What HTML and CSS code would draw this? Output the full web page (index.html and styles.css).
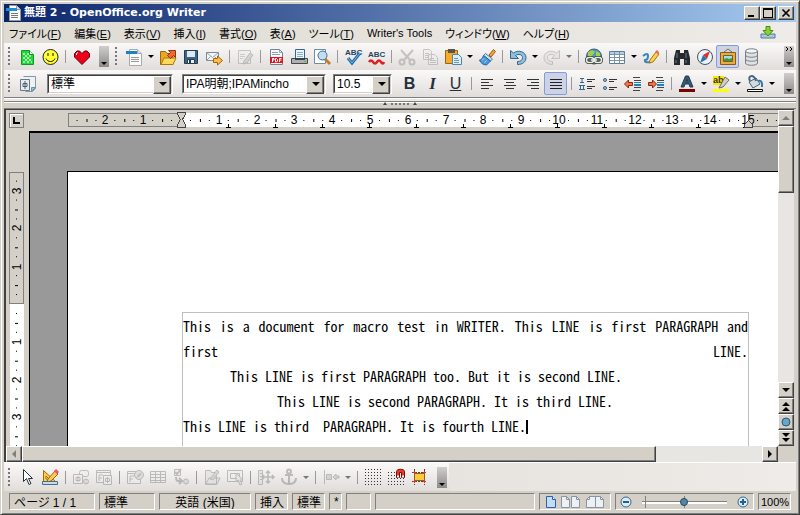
FILE: index.html
```html
<!DOCTYPE html>
<html lang="ja">
<head>
<meta charset="utf-8">
<title>無題 2 - OpenOffice.org Writer</title>
<link rel="stylesheet" href="styles.css">
</head>
<body>
<div class="window">
  <header class="titlebar">
    <svg class="app-icon" viewBox="0 0 16 16" aria-hidden="true"><path d="M3.500.5h7l4 4v11h-11z" fill="#fff" stroke="#999"/><path d="M10.500.5v4h4" fill="#ddd" stroke="#999"/><path d="M0 3h11v3H0z" fill="#1b8fd0"/><path d="M5 8.500h7M5 10.500h7M5 12.500h7" stroke="#777"/></svg>
    <h1>無題 2 - OpenOffice.org Writer</h1>
    <div class="caption-buttons">
      <button aria-label="最小化"><svg viewBox="0 0 12 10"><path d="M2 7h6v2H2z"/></svg></button>
      <button aria-label="最大化"><svg viewBox="0 0 12 10"><path d="M1 0h10v10H1zM2 2v7h8V2z" fill-rule="evenodd"/></svg></button>
      <button class="close" aria-label="閉じる"><svg viewBox="0 0 12 10"><path d="M2.500 1.500l7 7M9.500 1.500l-7 7" stroke="#000" stroke-width="1.700"/></svg></button>
    </div>
  </header>

  <nav class="menubar">
    <a href="#">ファイル(<u>F</u>)</a>
    <a href="#">編集(<u>E</u>)</a>
    <a href="#">表示(<u>V</u>)</a>
    <a href="#">挿入(<u>I</u>)</a>
    <a href="#">書式(<u>O</u>)</a>
    <a href="#">表(<u>A</u>)</a>
    <a href="#">ツール(<u>T</u>)</a>
    <a href="#">Writer's Tools</a>
    <a href="#">ウィンドウ(<u>W</u>)</a>
    <a href="#">ヘルプ(<u>H</u>)</a>
    <button class="update" aria-label="更新"><svg viewBox="0 0 16 14"><path d="M1 8h14v4H1z" fill="#a9c9da" stroke="#4d7f9c"/><path d="M6 .5h4v4h3L8 10 3 4.500h3z" fill="#8fd12f" stroke="#4b8a13"/></svg></button>
  </nav>

  <div class="toolbar">
    <span class="grip"></span>
    <button class="tool" aria-label="表計算"><svg viewBox="0 0 20 20"><path d="M4.500 3.500h8l4 4v10h-12z" fill="#20d83a" stroke="#14962a"/><path d="M6 6h2v2H6zM10 6h2v2h-2zM8 8h2v2H8zM12 8h2v2h-2zM6 10h2v2H6zM10 10h2v2h-2zM8 12h2v2H8zM12 12h2v2h-2zM6 14h2v2H6zM10 14h2v2h-2zM14 14h1v2h-1z" fill="#a7f7ae"/><path d="M12.500 3.500v4h4" fill="#fff" stroke="#14962a"/></svg></button>
    <button class="tool" aria-label="スマイル"><svg viewBox="0 0 20 20"><circle cx="10.500" cy="10" r="7.500" fill="#ff3" stroke="#222"/><path d="M7.500 6h1v3h-1zM12.500 6h1v3h-1z" fill="#111"/><path d="M6 11.500c1.500 4 7.500 4 9 0" fill="none" stroke="#111"/></svg></button>
    <span class="sep"></span>
    <button class="tool" aria-label="お気に入り"><svg viewBox="0 0 20 20"><path d="M11 17.500L3.500 10V6.500L6 4h2.500L11 6.500 13.500 4H16l2.500 2.500V10z" fill="#f00019" stroke="#5a0010"/><path d="M5.500 8V6.500L7 5.500" fill="none" stroke="#fff"/></svg></button>
    <button class="overflow first" aria-label="その他"></button>
    <span class="grip second"></span>
    <button class="tool" aria-label="新規作成"><svg viewBox="0 0 20 20"><path d="M5.500 2.500h8l4 4v12h-12z" fill="#fafafa" stroke="#aaa"/><path d="M13.500 2.500v4h4" fill="#ddd" stroke="#aaa"/><path d="M2 4h11v3H2z" fill="#1b84c0"/><path d="M7 10.500h8M7 12.500h8M7 14.500h8" stroke="#999"/></svg></button><button class="drop" aria-label="新規の種類"></button>
    <button class="tool" aria-label="開く"><svg viewBox="0 0 20 20"><path d="M2.500 17.500v-13h5l1.500 2h6v11z" fill="#e9a726" stroke="#9b6a10"/><path d="M3 17.500L6 11h12l-3 6.500z" fill="#ffd95c" stroke="#ad770d"/><path d="M9.500 8.500l3-3-2-2h7v7l-2-2-3 3z" fill="#ef6c2d" stroke="#96310c"/></svg></button>
    <button class="tool" aria-label="保存"><svg viewBox="0 0 20 20"><path d="M3.500 3.500h13v13h-13z" fill="#40637f" stroke="#223c52"/><path d="M6 4h8v6H6z" fill="#dce9f3"/><path d="M6.500 12.500h7v4h-7z" fill="#eee" stroke="#223c52"/><path d="M8 13h2v3H8z" fill="#223c52"/></svg></button>
    <button class="tool" aria-label="メール"><svg viewBox="0 0 20 20"><path d="M2.500 5.500h12v8h-12z" fill="#f2f5f8" stroke="#7d8b98"/><path d="M2.500 5.500l6 5 6-5M2.500 13.500l4-4M14.500 13.500l-4-4" fill="none" stroke="#93a1ad"/><path d="M9.500 11.500h4V9l5 4.500-5 4.500v-2.500h-4z" fill="#ffbd4a" stroke="#a86108"/></svg></button>
    <span class="sep"></span>
    <button class="tool off" aria-label="編集" disabled><svg viewBox="0 0 20 20"><path d="M3.500 3.500h12v13h-12z" fill="#eee" stroke="#999"/><path d="M5 7.500h5M5 9.500h5M5 11.500h3" stroke="#aaa"/><path d="M9 14l6-8 3 2-6 8-4 1z" fill="#bbb" stroke="#888"/></svg></button>
    <span class="sep"></span>
    <button class="tool" aria-label="PDF"><svg viewBox="0 0 20 20"><path d="M4.500 2.500h9l3 3v12h-12z" fill="#f7f9fb" stroke="#6b8699"/><path d="M13.500 2.500v3h3M6 5.500h6M6 7.500h8" fill="none" stroke="#8aa3b5"/><path d="M4 10h13v6H4z" fill="#e0161c"/><path d="M6.500 15v-3.500H8V13H6.500M9.500 15v-3.500h1l1 1v1.500l-1 1zM13.500 15v-3.500h2M13.500 13h2" fill="none" stroke="#fff"/></svg></button>
    <button class="tool" aria-label="印刷"><svg viewBox="0 0 20 20"><path d="M6.500 2.500h9v9h-9z" fill="#eef6fc" stroke="#37678b"/><path d="M8 5.500h6M8 7.500h6M8 9.500h6" stroke="#7fb0d0"/><path d="M2.500 11.500h16v5h-16z" fill="#aeb0b2" stroke="#44484b"/><path d="M6 11h10v2H6z" fill="#3c4043"/><path d="M15 14.500h2" stroke="#2ad532"/></svg></button>
    <button class="tool" aria-label="プレビュー"><svg viewBox="0 0 20 20"><path d="M2.500 2.500h11v14h-11z" fill="#fff" stroke="#6a8dac"/><path d="M13 12l5 5" stroke="#c97b21" stroke-width="3"/><circle cx="10.500" cy="8.500" r="4.500" fill="#bfe0f3" stroke="#426b88"/></svg></button>
    <span class="sep"></span>
    <button class="tool" aria-label="スペルチェック"><svg viewBox="0 0 20 20"><text x="2" y="8" class="icon-abc">ABC</text><path d="M5 11l4 5 8-10" fill="none" stroke="#1f6ca8" stroke-width="3"/><path d="M5 11l4 5 8-10" fill="none" stroke="#78baea"/></svg></button>
    <button class="tool" aria-label="自動スペルチェック"><svg viewBox="0 0 20 20"><text x="2" y="10" class="icon-abc">ABC</text><path d="M3 15q2-3 4 0t4 0 4 0 3 0" fill="none" stroke="#dc2020" stroke-width="2.500"/></svg></button>
    <span class="sep"></span>
    <button class="tool off" aria-label="切り取り" disabled><svg viewBox="0 0 20 20"><path d="M4 3l9 10M16 3L7 13" stroke="#999" stroke-width="2"/><circle cx="5" cy="15" r="2.500" fill="none" stroke="#999" stroke-width="2"/><circle cx="15" cy="15" r="2.500" fill="none" stroke="#999" stroke-width="2"/></svg></button>
    <button class="tool off" aria-label="コピー" disabled><svg viewBox="0 0 20 20"><path d="M3.500 2.500h6l2 2v8h-8zM8.500 7.500h6l3 3v7h-9z" fill="#eee" stroke="#999"/><path d="M5 6.500h4M5 8.500h3M5 10.500h3M10 11.500h4M10 13.500h6M10 15.500h6" stroke="#999"/></svg></button>
    <button class="tool" aria-label="貼り付け"><svg viewBox="0 0 20 20"><path d="M2.500 3.500h12v13h-12z" fill="#f4ad2b" stroke="#996515"/><path d="M5 2h7v4H5z" fill="#5a5549"/><path d="M9.500 7.500h6l3 3v7h-9z" fill="#dceefa" stroke="#5485a9"/><path d="M11 11.500h4M11 13.500h5M11 15.500h5" stroke="#6d9bbd"/></svg></button><button class="drop" aria-label="貼り付け方法"></button>
    <button class="tool" aria-label="書式の貼り付け"><svg viewBox="0 0 20 20"><path d="M12 8l4.500-5.500 2 2L14 10z" fill="#f0a342" stroke="#9a5b13"/><path d="M8.500 6.500l7 5.500-2 2-7-5.500z" fill="#cce0ef" stroke="#52789b"/><path d="M6.500 8.500l7 5.500-4 4c-3 0-6-2-7-5 2 0 3-2 4-4.500z" fill="#4b99dc" stroke="#1f629e"/><path d="M5 13.500l2-2M7.500 15.500l2-2" stroke="#b9ddf7"/></svg></button>
    <span class="sep"></span>
    <button class="tool" aria-label="元に戻す"><svg viewBox="0 0 20 20"><path d="M2.500 3.500v8h8L7.500 8.500c3-2 7-1 7 2s-2 4-5 4v3c5 0 8.500-2.500 8.500-7 0-6-8-8-12.500-4.500z" fill="#8fbfdf" stroke="#35678b"/></svg></button><button class="drop" aria-label="元に戻す履歴"></button>
    <button class="tool off" aria-label="やり直し" disabled><svg viewBox="0 0 20 20"><path d="M17.500 3.500v8h-8l3-3c-3-2-7-1-7 2s2 4 5 4v3c-5 0-8.500-2.500-8.500-7 0-6 8-8 12.500-4.500z" fill="#ddd" stroke="#999"/></svg></button><button class="drop off" aria-label="やり直し履歴" disabled></button>
    <span class="sep"></span>
    <button class="tool" aria-label="ハイパーリンク"><svg viewBox="0 0 20 20"><circle cx="10" cy="9.500" r="7.500" fill="#4a97ce" stroke="#305c77"/><path d="M4 5l4-2 3 2-3 4H4zM12 4l4 2v5l-4-2z" fill="#a6ce48"/><rect x="2.500" y="10.500" width="7" height="5" rx="2.500" fill="#56705a" stroke="#32382f" stroke-width="3"/><rect x="10.500" y="10.500" width="7" height="5" rx="2.500" fill="#56705a" stroke="#32382f" stroke-width="3"/><rect x="2.500" y="10.500" width="7" height="5" rx="2.500" fill="none" stroke="#e9eee9" stroke-width="1.500"/><rect x="10.500" y="10.500" width="7" height="5" rx="2.500" fill="none" stroke="#e9eee9" stroke-width="1.500"/><path d="M7 13h6" stroke="#e9eee9" stroke-width="1.500"/></svg></button>
    <button class="tool" aria-label="表"><svg viewBox="0 0 20 20"><path d="M2.500 4.500h15v12h-15z" fill="#fff" stroke="#5d7e99"/><path d="M3 5h14v2H3z" fill="#b5cfe2"/><path d="M3 7.500h14M3 10.500h14M3 13.500h14M7.500 5v11M12.500 5v11" stroke="#7895ab"/></svg></button><button class="drop" aria-label="表の行と列"></button>
    <button class="tool" aria-label="図形描画"><svg viewBox="0 0 20 20"><path d="M2 9q5-4 5 0t-3 4q-1 3 6 2" fill="none" stroke="#3685be" stroke-width="2"/><path d="M9 13l6-8 3 2-6 8-4 1z" fill="#ffd348" stroke="#a17317"/><path d="M14 5l2-2 2 2-1 2z" fill="#ed6669"/></svg></button>
    <span class="sep"></span>
    <button class="tool" aria-label="検索"><svg viewBox="0 0 20 20"><path d="M4 3h4v3h4V3h4l2 8v7h-6v-6H8v6H2v-7z" fill="#252a2e"/><path d="M5 6v5M14 6v5M4 13v3M14 13v3" stroke="#737c82"/></svg></button>
    <button class="tool" aria-label="ナビゲーター"><svg viewBox="0 0 20 20"><circle cx="10" cy="10" r="7.500" fill="#eef4f9" stroke="#3b5469"/><path d="M15 4l-3 8-4-4z" fill="#df3024"/><path d="M5 16l3-8 4 4z" fill="#2873bb"/></svg></button>
    <button class="tool pressed" aria-label="ギャラリー"><svg viewBox="0 0 20 20"><path d="M6 5l4-3 4 3" fill="none" stroke="#85703f"/><path d="M2.500 5.500h15v12h-15z" fill="#ebaa42" stroke="#8c5a12"/><path d="M5.500 8.500h9v6h-9z" fill="#a4daf7" stroke="#5d6b26"/><path d="M6 14v-2l3-1 2 1 3-1v3z" fill="#4e9430"/></svg></button>
    <button class="tool" aria-label="データソース"><svg viewBox="0 0 20 20"><path d="M4.500 4v12c0 3 12 3 12 0V4" fill="#dde2e5" stroke="#777e84"/><ellipse cx="10.500" cy="4" rx="6" ry="2.200" fill="#f4f6f7" stroke="#777e84"/><path d="M4.500 8c0 3 12 3 12 0M4.500 12c0 3 12 3 12 0" fill="none" stroke="#777e84"/></svg></button>
    <button class="overflow more" aria-label="その他"><svg viewBox="0 0 10 6"><path d="M2 1l2 2-2 2M6 1l2 2-2 2" fill="none" stroke="#000"/></svg></button>
  </div>

  <div class="toolbar">
    <span class="grip"></span>
    <button class="tool" aria-label="スタイルと書式"><svg viewBox="0 0 20 20"><path d="M6.500 2.500h12v12l-3 3h-7" fill="#eef2f4" stroke="#8697a3"/><path d="M18.500 13.500l-4 4v-4z" fill="#91c4e4" stroke="#6e8ea3"/><path d="M3.500 5.500h9v11h-9z" fill="#e7ebee" stroke="#657987"/><path d="M8 7v8M6 9.500h4v3H6z" fill="none" stroke="#4b5f6d"/></svg></button>
    <span class="combo style"><select aria-label="スタイルの適用"><option>標準</option></select></span>
    <span class="combo font"><select aria-label="フォント名"><option>IPA明朝;IPAMincho</option></select></span>
    <span class="combo size"><select aria-label="フォントサイズ"><option>10.5</option></select></span>
    <button class="tool letter bold" aria-label="太字">B</button>
    <button class="tool letter italic" aria-label="斜体">I</button>
    <button class="tool letter under" aria-label="下線">U</button>
    <span class="sep"></span>
    <button class="tool" aria-label="左揃え"><svg viewBox="0 0 20 20"><path d="M4 5.500h12M4 8.500h8M4 11.500h12M4 14.500h8" stroke="#333"/></svg></button>
    <button class="tool" aria-label="中央揃え"><svg viewBox="0 0 20 20"><path d="M4 5.500h12M6 8.500h8M4 11.500h12M6 14.500h8" stroke="#333"/></svg></button>
    <button class="tool" aria-label="右揃え"><svg viewBox="0 0 20 20"><path d="M4 5.500h12M8 8.500h8M4 11.500h12M8 14.500h8" stroke="#333"/></svg></button>
    <button class="tool pressed" aria-label="両端揃え"><svg viewBox="0 0 20 20"><path d="M4 5.500h12M4 8.500h12M4 11.500h12M4 14.500h12" stroke="#222"/></svg></button>
    <span class="sep"></span>
    <button class="tool" aria-label="番号付け"><svg viewBox="0 0 20 20"><path d="M3 4.500h4M5 4v5M3 8.500h4M2 11.500h6M3.500 11v5M6.500 11v5M2 15.500h6" stroke="#38678a"/><path d="M10 5.500h8M10 7.500h5M10 12.500h8M10 14.500h5" stroke="#333"/></svg></button>
    <button class="tool" aria-label="箇条書き"><svg viewBox="0 0 20 20"><circle cx="5" cy="6" r="1.500" fill="#9fc9e6" stroke="#315d7d"/><circle cx="5" cy="14" r="1.500" fill="#9fc9e6" stroke="#315d7d"/><path d="M9 5.500h8M9 7.500h5M9 13.500h8M9 15.500h5" stroke="#333"/></svg></button>
    <button class="tool" aria-label="インデント減"><svg viewBox="0 0 20 20"><path d="M10 3.500h7M11 6.500h7M11 13.500h7M10 16.500h7" stroke="#444"/><path d="M11 8h7v1h-7zM11 10h7v2h-7z" fill="#1f83c2"/><path d="M1.500 10l4-4v2.500h4v3h-4V14z" fill="#f17346" stroke="#8c260e"/></svg></button>
    <button class="tool" aria-label="インデント増"><svg viewBox="0 0 20 20"><path d="M10 3.500h7M11 6.500h7M11 13.500h7M10 16.500h7" stroke="#444"/><path d="M11 8h7v1h-7zM11 10h7v2h-7z" fill="#1f83c2"/><path d="M10.500 10l-4-4v2.500h-4v3h4V14z" fill="#f17346" stroke="#8c260e"/></svg></button>
    <span class="sep"></span>
    <button class="tool" aria-label="文字の色"><svg viewBox="0 0 20 20"><path d="M4 13L8.500 2h3L16 13h-3l-1-3H8l-1 3zM9 8h2l-1-3z" fill="#365b77" stroke="#203c52"/><path d="M2 15h16v3H2z" fill="#800000"/></svg></button><button class="drop" aria-label="文字の色の選択"></button>
    <button class="tool" aria-label="蛍光ペン"><svg viewBox="0 0 20 20"><path d="M2 2h11v9H2z" fill="#ffe600"/><text x="2" y="9" class="icon-ab">ab</text><path d="M9 12l5-9 4 3-6 7-4 1z" fill="#ccd0c7" stroke="#68705f"/><path d="M2 15h16v3H2z" fill="#ff0"/></svg></button><button class="drop" aria-label="蛍光ペンの選択"></button>
    <button class="tool" aria-label="背景色"><svg viewBox="0 0 20 20"><path d="M4 8l7-4 4 6-7 4z" fill="#d2dbe1" stroke="#466075"/><path d="M5 7C2 1 9 0 11 7" fill="none" stroke="#416784" stroke-width="2"/><path d="M13 7c5-1 4 4 4 6" fill="none" stroke="#3679a8" stroke-width="2"/><path d="M2.500 15.500h15v2h-15z" fill="#fff" stroke="#111"/></svg></button><button class="drop" aria-label="背景色の選択"></button>
    <button class="overflow" aria-label="その他"></button>
  </div>

  <div class="splitter"><svg viewBox="0 0 36 4"><path d="M1 3h4L3 0zM31 3h4l-2-3z" fill="#444"/><path d="M9 1h2v2H9zM13 1h2v2h-2zM17 1h2v2h-2zM21 1h2v2h-2zM25 1h2v2h-2z" fill="#777"/></svg></div>

  <main class="editor">
    <div class="ruler-row">
      <button class="tab-type" aria-label="タブの種類"><svg viewBox="0 0 9 9"><path d="M1 1h2v5h5v2H1z"/></svg></button>
      <svg class="h-ruler" aria-hidden="true">
        <defs>
          <pattern id="hmarks" x="113" y="0" width="37.800" height="18" patternUnits="userSpaceOnUse"><path d="M9 10h1v1H9zM19 9h1v3h-1zM28 10h1v1h-1z"/></pattern>
        </defs>
        <path d="M113 3h567v14H113z" fill="#fff"/>
        <path d="M.5 3.500h113v13H.5zM680.500 3.500H720v13h-39.500z" fill="#d4d0c8" stroke="#808080"/>
        <path d="M1 1h709v16H1z" fill="url(#hmarks)"/>
        <g class="numbers">
          <text x="37" y="14">2</text><text x="75" y="14">1</text><text x="151" y="14">1</text><text x="189" y="14">2</text><text x="226" y="14">3</text><text x="264" y="14">4</text><text x="302" y="14">5</text><text x="340" y="14">6</text><text x="378" y="14">7</text><text x="415" y="14">8</text><text x="453" y="14">9</text><text x="491" y="14">10</text><text x="529" y="14">11</text><text x="567" y="14">12</text><text x="604" y="14">13</text><text x="642" y="14">14</text><text x="680" y="14">15</text>
        </g>
        <path d="M158 17h5M160.500 14v3M205 17h5M207.500 14v3M252 17h5M254.500 14v3M299 17h5M301.500 14v3M346 17h5M348.500 14v3M393 17h5M395.500 14v3M440 17h5M442.500 14v3M487 17h5M489.500 14v3M534 17h5M536.500 14v3M581 17h5M583.500 14v3M628 17h5M630.500 14v3M675 17h5M677.500 14v3" stroke="#000"/>
        <path d="M109.500 2.500h8v2l-3 5 3 5v3h-8v-3l3-5-3-5z" fill="#d4d0c8" stroke="#444"/>
        <path d="M676.500 17.500v-3l4-4 4 4v3z" fill="#d4d0c8" stroke="#444"/>
      </svg>
    </div>
    <div class="v-ruler-col">
      <svg class="v-ruler" aria-hidden="true">
        <defs>
          <pattern id="vmarks" x="0" y="132" width="15" height="37.800" patternUnits="userSpaceOnUse"><path d="M7 9h1v1H7zM6 19h3v1H6zM7 28h1v1H7z"/></pattern>
        </defs>
        <path d="M1 132h14v400H1z" fill="#fff"/>
        <path d="M.5.5h14v131H.5z" fill="#d4d0c8" stroke="#808080"/>
        <path d="M1 3h14v500H1z" fill="url(#vmarks)"/>
        <g class="numbers">
          <text transform="translate(12 19) rotate(-90)">3</text><text transform="translate(12 56) rotate(-90)">2</text><text transform="translate(12 95) rotate(-90)">1</text><text transform="translate(12 170) rotate(-90)">1</text><text transform="translate(12 208) rotate(-90)">2</text><text transform="translate(12 245) rotate(-90)">3</text>
        </g>
      </svg>
    </div>
    <div class="canvas">
      <article class="page">
        <div class="text-area">
          <p class="justified">This is a document for macro test in WRITER. This LINE is first PARAGRAPH and</p>
          <p class="justified">first LINE.</p>
          <p class="indent-one">This LINE is first PARAGRAPH too. But it is second LINE.</p>
          <p class="indent-two">This LINE is second PARAGRAPH. It is third LINE.</p>
          <p>This LINE is third&nbsp; PARAGRAPH. It is fourth LINE.<span class="caret"></span></p>
        </div>
      </article>
    </div>
    <div class="v-scroll">
      <button aria-label="上へ" disabled><svg viewBox="0 0 10 10"><path d="M1 7h8L5 3z" fill="#808080"/></svg></button>
      <div class="thumb"></div>
      <div class="track"></div>
      <button aria-label="下へ"><svg viewBox="0 0 10 10"><path d="M1 3h8L5 7z"/></svg></button>
      <button aria-label="前のページ"><svg viewBox="0 0 10 10"><path d="M1 5h8L5 1zM1 10h8L5 6z"/></svg></button>
      <button aria-label="ナビゲーション"><svg viewBox="0 0 10 10"><circle cx="5" cy="5" r="4" fill="#69a5c5" stroke="#285878"/></svg></button>
      <button aria-label="次のページ"><svg viewBox="0 0 10 10"><path d="M1 0h8L5 4zM1 5h8L5 9z"/></svg></button>
    </div>
    <div class="h-scroll">
      <button aria-label="左へ" disabled><svg viewBox="0 0 10 10"><path d="M7 1v8L3 5z" fill="#808080"/></svg></button>
      <div class="thumb"></div>
      <div class="track"></div>
      <button aria-label="右へ"><svg viewBox="0 0 10 10"><path d="M3 1v8l4-4z"/></svg></button>
    </div>
  </main>

  <div class="drawbar">
    <div class="toolbar">
      <span class="grip"></span>
      <button class="tool" aria-label="選択"><svg viewBox="0 0 20 20"><path d="M6.500 2.500v12l3-3 2.500 6 2-1-2.500-5h4z" fill="#fff" stroke="#23303a"/></svg></button>
      <button class="tool" aria-label="デザインモード"><svg viewBox="0 0 20 20"><path d="M3.500 3.500v11h12z" fill="#ffcd42" stroke="#a36a10"/><path d="M6 9v3h3z" fill="#fff" stroke="#a36a10"/><path d="M8 12l7-8 3 3-7 7-4 1z" fill="#ffc94b" stroke="#9b6413"/><path d="M15 3l3 3" stroke="#ec5868" stroke-width="3"/><path d="M2.500 14.500h15v3h-15z" fill="#c6dcee" stroke="#486d8b"/></svg></button>
      <span class="sep"></span>
      <button class="tool off" aria-label="コントロール" disabled><svg viewBox="0 0 20 20"><rect x="8.500" y="3.500" width="9" height="6" rx="2" fill="#eee" stroke="#888"/><path d="M2.500 7.500h9v9h-9zM7 9v6M5 10.500h4v3H5z" fill="#eee" stroke="#888"/><circle cx="15" cy="14.500" r="2.500" fill="#ccc" stroke="#888"/></svg></button>
      <button class="tool off" aria-label="フォーム" disabled><svg viewBox="0 0 20 20"><path d="M2.500 3.500h14v12h-14zM3 5.500h13M5 14V8h4M5 11h3" fill="#eee" stroke="#888"/><path d="M9.500 8.500h8v9h-8zM13.500 10v6M11.500 11.500h4v3h-4z" fill="#eee" stroke="#888"/></svg></button>
      <span class="sep"></span>
      <button class="tool off" aria-label="フォームナビゲーター" disabled><svg viewBox="0 0 20 20"><path d="M2.500 4.500h13v12h-13zM3 6.500h12M5 15V9h4M5 12h3" fill="#eee" stroke="#888"/><circle cx="14" cy="8" r="4.500" fill="#ccc" stroke="#888"/><path d="M11 11l3-4 3-2-2 4z" fill="#888"/></svg></button>
      <button class="tool off" aria-label="表コントロール" disabled><svg viewBox="0 0 20 20"><path d="M2.500 4.500h15v11h-15zM3 7.500h14M3 10.500h14M3 13.500h14M7.500 5v10M12.500 5v10" fill="#eee" stroke="#888"/></svg></button>
      <button class="tool off" aria-label="並び順" disabled><svg viewBox="0 0 20 20"><path d="M3.500 2.500h6v6h-6z" fill="#eee" stroke="#888"/><path d="M4 5l2 2 4-5M5 10c0 5 2 4 5 4M8 11l3 3-3 3" fill="none" stroke="#888" stroke-width="2"/><circle cx="15" cy="14.500" r="2.500" fill="#ccc" stroke="#888"/></svg></button>
      <span class="sep"></span>
      <button class="tool off" aria-label="デザインで開く" disabled><svg viewBox="0 0 20 20"><path d="M3.500 17.500v-14h5l1 2h5v12zM4 17l3-6h11l-3 6z" fill="#ddd" stroke="#888"/><path d="M8 12l7-9 2 2-6 8z" fill="#bbb" stroke="#888"/></svg></button>
      <button class="tool off" aria-label="自動フォーカス" disabled><svg viewBox="0 0 20 20"><path d="M2.500 3.500h15v11h-15zM5.500 6.500h9v5h-9z" fill="#eee" stroke="#888"/><path d="M11 6v9l2-2 2 5 2-1-2-4h3z" fill="#ddd" stroke="#888"/></svg></button>
      <span class="sep"></span>
      <button class="tool off" aria-label="位置とサイズ" disabled><svg viewBox="0 0 20 20"><path d="M2.500 3.500h4v14h-4zM4 6.500h3M4 9.500h3M4 12.500h3" fill="#ddd" stroke="#888"/><path d="M12 4v12M6 10h12M10 6l2-2 2 2M10 14l2 2 2-2M8 8l-2 2 2 2M16 8l2 2-2 2" fill="none" stroke="#888" stroke-width="1.500"/></svg></button>
      <button class="tool off" aria-label="アンカー" disabled><svg viewBox="0 0 20 20"><circle cx="10" cy="4.500" r="2" fill="none" stroke="#888" stroke-width="2"/><path d="M10 6v11M6 8h8M3 11c0 4 3 6 7 6s7-2 7-6" fill="none" stroke="#888" stroke-width="2"/></svg></button><button class="drop off" aria-label="アンカーの変更" disabled></button>
      <span class="sep"></span>
      <button class="tool off" aria-label="配置" disabled><svg viewBox="0 0 20 20"><path d="M3.500 3v14M5.500 7.500h5v5h-5zM12 10l3-3v2h3v2h-3v2z" fill="#bbb" stroke="#888"/></svg></button><button class="drop off" aria-label="配置の選択" disabled></button>
      <span class="sep"></span>
      <button class="tool" aria-label="グリッド線の表示"><svg viewBox="0 0 20 20"><path d="M2 2.500h17M2 5.500h17M2 8.500h17M2 11.500h17M2 14.500h17M2 17.500h17" stroke="#333" stroke-dasharray="1 2"/></svg></button>
      <button class="tool" aria-label="グリッド線で位置合わせ"><svg viewBox="0 0 20 20"><path d="M2 5.500h7M2 8.500h7M2 11.500h16M2 14.500h16M2 17.500h16" stroke="#333" stroke-dasharray="1 2"/><path d="M10.500 10.500v-6c0-3 8-3 8 0v6h-3v-5h-2v5z" fill="#ed3828" stroke="#721008"/><path d="M11 9.500h2M16 9.500h2" stroke="#fff" stroke-width="2"/></svg></button>
      <button class="tool" aria-label="補助線"><svg viewBox="0 0 20 20"><path d="M5.500 2v16M15.500 2v16M3 5.500h15M3 14.500h15" stroke="#444" stroke-dasharray="2 1"/><path d="M5.500 6.500h10v7h-10z" fill="#ffc83d" stroke="#946212"/><path d="M5.500 4v3M4 5.500h3M15.500 4v3M14 5.500h3M5.500 13v3M4 14.500h3M15.500 13v3M14 14.500h3" stroke="#d33"/></svg></button>
      <button class="overflow first" aria-label="その他"></button>
    </div>
  </div>

  <footer class="statusbar">
    <span>ページ 1 / 1</span>
    <span>標準</span>
    <span class="center">英語 (米国)</span>
    <span>挿入</span>
    <span>標準</span>
    <span>*</span>
    <span></span>
    <span></span>
    <span class="views">
      <button aria-label="単一ページ"><svg viewBox="0 0 10 12"><path d="M.5.5h6l3 3v8h-9z" fill="#c5dcf8" stroke="#2e61a8"/><path d="M6.500.5v3h3" fill="#fff" stroke="#2e61a8"/></svg></button>
      <button class="wide" aria-label="複数ページ"><svg viewBox="0 0 20 12"><path d="M.5.5h5l3 3v8h-8zM10.500.5h5l3 3v8h-8z" fill="#eef1f4" stroke="#8795a2"/><path d="M5.500.5v3h3M15.500.5v3h3" fill="none" stroke="#8795a2"/></svg></button>
      <button class="wide" aria-label="見開きページ"><svg viewBox="0 0 20 12"><path d="M3.500.5h6v11h-9v-8zM9.500.5h5l3 3v8h-8z" fill="#eef1f4" stroke="#8795a2"/><path d="M3.500.5v3h-3M14.500.5v3h3" fill="none" stroke="#8795a2"/></svg></button>
    </span>
    <span class="zoom">
      <button aria-label="縮小"><svg viewBox="0 0 12 12"><circle cx="6" cy="6" r="5" fill="#d8edf9" stroke="#3c6785"/><path d="M3 6h6" stroke="#235f8b" stroke-width="2"/></svg></button>
      <input type="range" min="0" max="100" value="49" aria-label="倍率">
      <button aria-label="拡大"><svg viewBox="0 0 12 12"><circle cx="6" cy="6" r="5" fill="#d8edf9" stroke="#3c6785"/><path d="M3 6h6M6 3v6" stroke="#235f8b" stroke-width="2"/></svg></button>
    </span>
    <span class="percent">100%</span>
  </footer>
</div>
</body>
</html>
```
FILE: styles.css
```css
* { box-sizing: border-box; }

:root {
  --face: #d4d0c8;
  --shade: #808080;
  --dark: #404040;
}

body {
  margin: 0;
  font: 12px "Liberation Sans", "Noto Sans CJK JP", sans-serif;
  color: #000;
}

button {
  margin: 0;
  padding: 0;
  border: 0;
  background: none;
  color: inherit;
  font: inherit;
}

svg { display: block; }

.window {
  display: flex;
  flex-direction: column;
  height: 100vh;
  padding: 3px;
  border: 1px solid;
  border-color: var(--face) var(--dark) var(--dark) var(--face);
  box-shadow: inset 1px 1px #fff, inset -1px -1px var(--shade);
  background: var(--face);
}

/* Title bar */
.titlebar {
  display: flex;
  align-items: center;
  flex: none;
  height: 18px;
  padding: 0 2px;
  background: linear-gradient(90deg, #0a246a, #a6caf0);
}

.app-icon { width: 16px; height: 16px; }

.titlebar h1 {
  flex: 1;
  margin: 0 0 0 2px;
  color: #fff;
  font: bold 11px/18px "DejaVu Sans", "Noto Sans CJK JP", sans-serif;
}

.caption-buttons { display: flex; }

.caption-buttons button,
.v-scroll button,
.h-scroll button,
.thumb {
  border: 1px solid;
  border-color: #fff var(--dark) var(--dark) #fff;
  box-shadow: inset -1px -1px var(--shade);
  background: var(--face);
}

.caption-buttons button { width: 16px; height: 14px; padding: 1px; }
.caption-buttons .close { margin-left: 2px; }
.caption-buttons svg { width: 12px; height: 10px; }

/* Menu */
.menubar {
  display: flex;
  align-items: center;
  gap: 13px;
  flex: none;
  height: 21px;
  padding: 0 20px 0 5px;
  background: linear-gradient(90deg, #dedbd3, #eeebe8);
}

.menubar a {
  color: #000;
  font-size: 11px;
  text-decoration: none;
  white-space: nowrap;
  font-feature-settings: "palt";
}

.update { margin-left: auto; }
.update svg { width: 16px; height: 14px; }

/* Toolbars */
.toolbar {
  display: flex;
  align-items: center;
  flex: none;
  height: 27px;
  padding-right: 2px;
  background: linear-gradient(#fbf9f8, #e0dddb);
}

.grip {
  width: 11px;
  height: 19px;
  background: repeating-linear-gradient(#777 0 2px, transparent 2px 4px) 4px 0 / 2px 100% no-repeat;
}

.grip.second { width: 13px; background-position: 6px 0; }

.tool {
  display: flex;
  align-items: center;
  justify-content: center;
  flex: none;
  width: 23px;
  height: 23px;
}

.tool svg { flex: none; width: 20px; height: 20px; }
.tool.off { opacity: .5; }

.pressed {
  border: 1px solid #829ddd;
  border-radius: 2px;
  background: #cdd3e5;
}

.drop {
  display: flex;
  justify-content: center;
  flex: none;
  width: 11px;
}

.drop::before {
  content: "";
  border: 3px solid transparent;
  border-top-color: #000;
  border-bottom: 0;
}

.drop.off { opacity: .5; }

.sep {
  flex: none;
  width: 8px;
  height: 13px;
  background: linear-gradient(#999, #999) 4px 0 / 1px 100% no-repeat;
}

.overflow {
  display: flex;
  flex-direction: column;
  align-items: center;
  justify-content: flex-end;
  width: 10px;
  height: 21px;
  margin-left: auto;
  padding-bottom: 2px;
  background: linear-gradient(#d0cecd, #8d8b8a);
}

.overflow::after {
  content: "";
  border: 3px solid transparent;
  border-top-color: #000;
  border-bottom: 0;
}

.overflow.first { margin-left: 7px; }
.overflow.more { justify-content: space-between; }
.overflow.more svg { width: 10px; height: 6px; }

.icon-abc { font: bold 8px "Liberation Sans", sans-serif; fill: #26455c; }
.icon-ab { font: bold 9px "Liberation Sans", sans-serif; fill: #333; }

.letter { color: #26303d; font-size: 16px; }
.bold { font-weight: bold; }
.italic { font: italic bold 17px "Liberation Serif", serif; }
.under { text-decoration: underline; }

.combo {
  position: relative;
  flex: none;
  height: 20px;
  border: 1px solid;
  border-color: var(--shade) #fff #fff var(--shade);
}

.combo select {
  appearance: none;
  width: 100%;
  height: 18px;
  padding: 0 18px 0 2px;
  border: 1px solid;
  border-color: var(--dark) var(--face) var(--face) var(--dark);
  border-radius: 0;
  background: #fff;
  color: #000;
  font: inherit;
}

.combo::before {
  content: "";
  position: absolute;
  top: 1px;
  right: 1px;
  width: 16px;
  height: 16px;
  border: 1px solid;
  border-color: #fff var(--dark) var(--dark) #fff;
  box-shadow: inset -1px -1px var(--shade);
  background: var(--face);
  pointer-events: none;
}

.combo::after {
  content: "";
  position: absolute;
  top: 7px;
  right: 5px;
  border: 4px solid transparent;
  border-top-color: #000;
  border-bottom: 0;
  pointer-events: none;
}

.combo.style { width: 126px; margin-left: 9px; }
.combo.font { width: 144px; margin-left: 9px; }
.combo.size { width: 59px; margin: 0 6px 0 7px; }

.splitter {
  display: flex;
  align-items: flex-end;
  justify-content: center;
  flex: none;
  height: 12px;
  padding-bottom: 2px;
  border-top: 1px solid var(--shade);
  border-bottom: 1px solid var(--shade);
  background: linear-gradient(#fff 0 1px, #eceae6 1px 3px, #808080 3px 4px, #fff 4px 5px, #d4d0c8 5px);
}

.splitter svg { width: 36px; height: 4px; }

/* Document */
.editor {
  display: grid;
  grid-template: 21px minmax(0, 1fr) 16px / 23px minmax(0, 1fr) 16px;
  flex: 1;
  min-height: 0;
  margin-right: 2px;
  border: solid var(--dark);
  border-width: 1px 0 0 2px;
}

.ruler-row {
  display: flex;
  align-items: flex-start;
  grid-column: 1 / 3;
  min-width: 0;
}

.tab-type {
  flex: none;
  width: 15px;
  height: 15px;
  margin: 3px 44px 0 3px;
  padding: 2px;
  border: 1px solid var(--shade);
  box-shadow: inset 1px 1px #fff;
}

.tab-type svg { width: 9px; height: 9px; }

.h-ruler { flex: 1; min-width: 0; height: 19px; shape-rendering: crispEdges; }
.numbers { font-size: 12px; text-anchor: middle; }
.v-ruler-col { min-height: 0; padding: 41px 0 0 3px; }
.v-ruler { width: 15px; height: 100%; shape-rendering: crispEdges; }

.canvas {
  display: flex;
  min-width: 0;
  overflow: hidden;
  padding: 38px 0 0 37px;
  border: solid #000;
  border-width: 2px 0 0 1px;
  background: #999;
}

.page {
  display: flex;
  flex: 1;
  padding: 140px 29px 0 114px;
  border: solid #000;
  border-width: 1px 0 0 1px;
  background: #fff;
}

.text-area {
  flex: 1;
  padding-top: 1px;
  border: 1px solid #bfbfbf;
  border-bottom: 0;
  font: 14px/25px "Noto Sans CJK JP", sans-serif;
  font-feature-settings: "hwid";
  font-variant-ligatures: none;
  white-space: nowrap;
}

.text-area p { margin: 0; }
.justified { white-space: normal; text-align-last: justify; }
.text-area .indent-one { margin-left: 47px; }
.text-area .indent-two { margin-left: 94px; }

.caret {
  display: inline-block;
  width: 2px;
  height: 14px;
  background: #000;
  vertical-align: -2px;
}

/* Scroll bars */
.v-scroll {
  display: flex;
  flex-direction: column;
  grid-area: 1 / 3 / 3 / 4;
}

.v-scroll button,
.h-scroll button {
  display: flex;
  align-items: center;
  justify-content: center;
  flex: none;
  width: 16px;
  height: 16px;
}

.v-scroll svg,
.h-scroll svg { width: 10px; height: 10px; }
.v-scroll .thumb { flex: 66; }
.v-scroll .track { flex: 191; background: #e8e6e2; }
.h-scroll { display: flex; grid-column: 1 / 3; }
.h-scroll .thumb { flex: 635; }
.h-scroll .track { flex: 106; background: #e8e6e2; }

/* Drawing bar */
.drawbar {
  display: flex;
  flex: none;
  height: 29px;
  border-top: 1px solid #fff;
  background: linear-gradient(90deg, #dedbd3, #eeebe8);
}

.drawbar .toolbar { height: 28px; }

/* Status bar */
.statusbar {
  display: grid;
  grid-template-columns: 86px 56px 92px 33px 33px 13px 25px minmax(0, 1fr) 72px 139px 33px;
  gap: 4px;
  flex: none;
  height: 20px;
  padding: 2px 5px 1px;
  font-feature-settings: "palt";
}

.statusbar > span {
  display: flex;
  align-items: center;
  overflow: hidden;
  padding-left: 4px;
  border: 1px solid;
  border-color: var(--shade) #fff #fff var(--shade);
  white-space: nowrap;
}

.statusbar .center { justify-content: center; padding: 0; }
.statusbar .percent { padding-left: 2px; font-size: 11px; }
.statusbar .views { gap: 5px; padding-left: 6px; }
.views svg { width: 10px; height: 12px; }
.views .wide svg { width: 20px; }
.statusbar .zoom { gap: 10px; padding-right: 4px; }
.zoom svg { width: 12px; height: 12px; }

.zoom input {
  appearance: none;
  flex: 1;
  min-width: 0;
  height: 12px;
  margin: 0;
  background:
    linear-gradient(#808080, #808080) 3px 0 / 1px 100% no-repeat,
    linear-gradient(#808080, #808080) 50% 0 / 1px 100% no-repeat,
    linear-gradient(#808080 0 1px, #fff 1px) 0 5px / 100% 3px no-repeat;
}

.zoom input::-webkit-slider-thumb {
  appearance: none;
  width: 8px;
  height: 8px;
  border: 1px solid #24485f;
  border-radius: 50%;
  background: #5487a5;
}
```
